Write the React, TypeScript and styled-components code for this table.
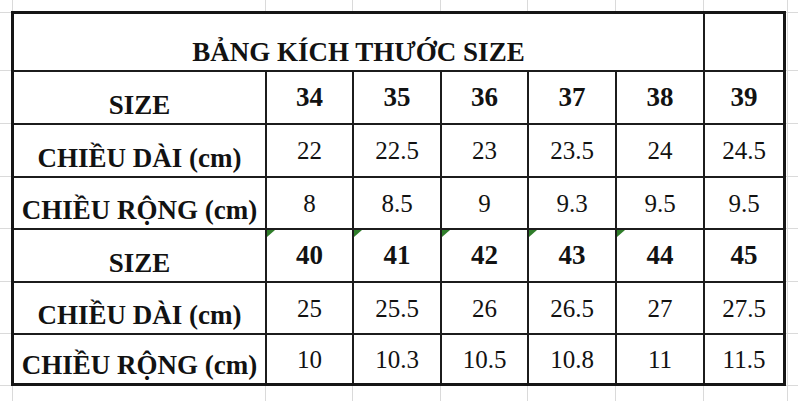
import React from "react";
import styled, { createGlobalStyle } from "styled-components";

const GlobalStyle = createGlobalStyle`
  html, body {
    margin: 0;
    padding: 0;
    background: #ffffff;
  }
  body {
    font-family: "Liberation Serif", "DejaVu Serif", "Times New Roman", serif;
    color: #121212;
  }
`;

const GRID_X = [12, 265, 352, 440, 527, 615, 703, 787];
const GRID_Y = [12, 70, 123, 176, 228, 281, 333, 385];
const GRID_COLOR = "#dadada";

const lines = [
  ...GRID_X.map((x) => ({ pos: `${x}px 0`, size: "1px 100%" })),
  ...GRID_Y.map((y) => ({ pos: `0 ${y}px`, size: "100% 1px" })),
];

const Sheet = styled.div`
  width: 798px;
  height: 401px;
  box-sizing: border-box;
  padding: 11px 0 0 11px;
  overflow: hidden;
  background-color: #ffffff;
  background-image: ${lines.map(() => `linear-gradient(${GRID_COLOR}, ${GRID_COLOR})`).join(", ")};
  background-position: ${lines.map((l) => l.pos).join(", ")};
  background-size: ${lines.map((l) => l.size).join(", ")};
  background-repeat: no-repeat;
`;

const SizeTable = styled.div`
  display: grid;
  width: max-content;
  grid-template-columns: 251px 85px 86px 85px 86px 86px 78px;
  grid-template-rows: 56px 51px 51px 50px 51px 50px 48px;
  gap: 2px;
  border: 3px solid #161616;
  background: #1c1c1c;
`;

/* Title and row labels: bold, bottom aligned like Excel's default */
const Cell = styled.div<{ $span?: number }>`
  position: relative;
  grid-column: span ${(p) => p.$span ?? 1};
  background: #ffffff;
  display: flex;
  align-items: flex-end;
  justify-content: center;
  box-sizing: border-box;
  padding-bottom: 4px;
  font-family: "Liberation Serif", "DejaVu Serif", serif;
  font-size: 27px;
  font-weight: 700;
  line-height: 1;
  white-space: nowrap;
`;

/* Numbers: vertically centred, bold for the size header rows */
const NumCell = styled.div<{ $bold?: boolean; $marked?: boolean }>`
  position: relative;
  background: #ffffff;
  display: flex;
  align-items: center;
  justify-content: center;
  font-family: "Liberation Serif", "DejaVu Serif", serif;
  font-size: ${(p) => (p.$bold ? "27px" : "25px")};
  font-weight: ${(p) => (p.$bold ? 700 : 400)};
  line-height: 1;
  white-space: nowrap;
  ${(p) =>
    p.$marked
      ? `&::before {
    content: "";
    position: absolute;
    left: 0;
    top: 0;
    width: 0;
    height: 0;
    border-top: 7px solid #2f7d2a;
    border-right: 8px solid transparent;
  }`
      : ""}
`;

type Block = {
  sizes: string[];
  lengths: string[];
  widths: string[];
  marked: boolean;
};

const blocks: Block[] = [
  {
    sizes: ["34", "35", "36", "37", "38", "39"],
    lengths: ["22", "22.5", "23", "23.5", "24", "24.5"],
    widths: ["8", "8.5", "9", "9.3", "9.5", "9.5"],
    marked: false,
  },
  {
    sizes: ["40", "41", "42", "43", "44", "45"],
    lengths: ["25", "25.5", "26", "26.5", "27", "27.5"],
    widths: ["10", "10.3", "10.5", "10.8", "11", "11.5"],
    marked: true,
  },
];

export default function App() {
  return (
    <>
      <GlobalStyle />
      <Sheet>
        <SizeTable>
          <Cell $span={6}>BẢNG KÍCH THƯỚC SIZE</Cell>
          <Cell />
          {blocks.map((b, bi) => (
            <React.Fragment key={bi}>
              <Cell>SIZE</Cell>
              {b.sizes.map((s, i) => (
                <NumCell key={`s${i}`} $bold $marked={b.marked && i < 5}>
                  {s}
                </NumCell>
              ))}
              <Cell>CHIỀU DÀI (cm)</Cell>
              {b.lengths.map((v, i) => (
                <NumCell key={`l${i}`}>{v}</NumCell>
              ))}
              <Cell>CHIỀU RỘNG (cm)</Cell>
              {b.widths.map((v, i) => (
                <NumCell key={`w${i}`}>{v}</NumCell>
              ))}
            </React.Fragment>
          ))}
        </SizeTable>
      </Sheet>
    </>
  );
}
